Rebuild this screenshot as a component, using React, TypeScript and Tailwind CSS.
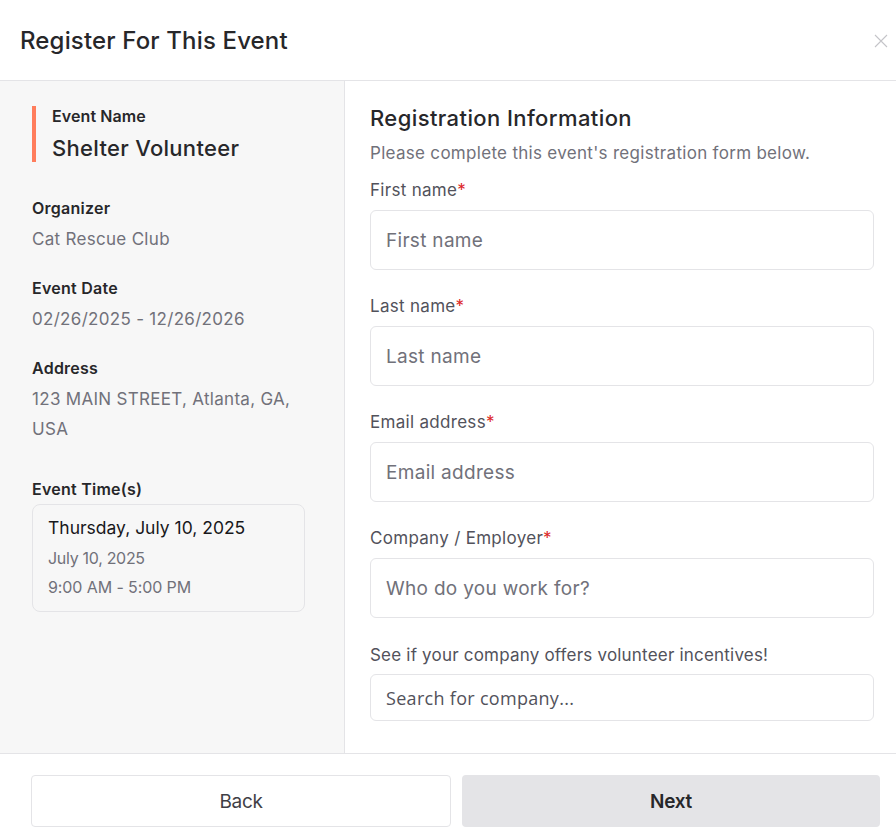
const font = { fontFamily: 'Inter, "Noto Sans", sans-serif' };

function Field({ label, placeholder }: { label: string; placeholder: string }) {
  return (
    <div className="flex flex-col">
      <label className="text-[17px] leading-[24px] text-[#52525b] tracking-[0.3px]">
        {label}
        <span className="text-[#dc2626]">*</span>
      </label>
      <input
        placeholder={placeholder}
        className="mt-[8px] h-[60px] w-full rounded-[6px] border border-[#e4e4e7] bg-white px-[15px] text-[19px] tracking-[0.3px] text-[#27272a] placeholder:text-[#71717a] outline-none"
      />
    </div>
  );
}

function Info({ label, value }: { label: string; value: string }) {
  return (
    <div className="flex flex-col">
      <span className="text-[16px] leading-[24px] font-semibold text-[#27272a] tracking-[0.25px]">{label}</span>
      <span className="mt-[4px] text-[17px] leading-[30px] text-[#71717a] tracking-[0.3px]">{value}</span>
    </div>
  );
}

export default function App() {
  return (
    <div className="flex h-[840px] w-[896px] flex-col bg-white" style={font}>
      {/* Header */}
      <div className="flex h-[81px] shrink-0 items-center justify-between border-b border-[#e4e4e7] pl-[20px] pr-[3px] pt-[2px]">
        <h1 className="text-[24px] font-medium tracking-[0.15px] text-[#27272a]">Register For This Event</h1>
        <button className="flex h-[24px] w-[24px] items-center justify-center text-[#c4c4c8]">
          <svg width="14" height="14" viewBox="0 0 14 14" fill="none" stroke="currentColor" strokeWidth="1.1">
            <path d="M1 1L13 13M13 1L1 13" />
          </svg>
        </button>
      </div>

      {/* Body */}
      <div className="flex min-h-0 flex-1">
        <aside className="w-[345px] shrink-0 border-r border-[#e4e4e7] bg-[#f7f7f7] pl-[32px] pr-[39px] pt-[25px]">
          <div className="flex border-l-[4px] border-[#ff7d5c] pl-[16px]">
            <div className="flex flex-col">
              <span className="text-[16px] leading-[20px] font-semibold text-[#27272a] tracking-[0.1px]">Event Name</span>
              <span className="mt-[8px] text-[22px] leading-[28px] font-medium text-[#27272a] tracking-[0.3px]">Shelter Volunteer</span>
            </div>
          </div>

          <div className="mt-[34px] flex flex-col gap-[22px]">
            <Info label="Organizer" value="Cat Rescue Club" />
            <Info label="Event Date" value="02/26/2025 - 12/26/2026" />
            <Info label="Address" value="123 MAIN STREET, Atlanta, GA, USA" />
          </div>

          <div className="mt-[33px] flex flex-col">
            <span className="text-[16px] leading-[24px] font-semibold text-[#27272a] tracking-[0.25px]">Event Time(s)</span>
            <div className="mt-[3px] flex flex-col rounded-[8px] border border-[#e4e4e7] px-[15px] pt-[10px] pb-[9px]">
              <span className="text-[17.5px] leading-[26px] text-[#18181b] tracking-[0px]">Thursday, July 10, 2025</span>
              <span className="mt-[3px] text-[16px] leading-[29px] text-[#71717a] tracking-[-0.3px]">July 10, 2025</span>
              <span className="text-[16px] leading-[29px] text-[#71717a] tracking-[-0.1px]">9:00 AM - 5:00 PM</span>
            </div>
          </div>
        </aside>

        <main className="flex-1 pl-[25px] pr-[22px] pt-[22px]">
          <h2 className="text-[22px] leading-[30px] font-medium text-[#27272a] tracking-[0.4px]">Registration Information</h2>
          <p className="mt-[7px] text-[17px] leading-[26px] text-[#71717a] tracking-[0.3px]">Please complete this event's registration form below.</p>

          <div className="mt-[12px] flex flex-col gap-[24px]">
            <Field label="First name" placeholder="First name" />
            <Field label="Last name" placeholder="Last name" />
            <Field label="Email address" placeholder="Email address" />
            <Field label="Company / Employer" placeholder="Who do you work for?" />
          </div>

          <p className="mt-[25px] text-[17px] leading-[24px] text-[#52525b] tracking-[0.2px]">See if your company offers volunteer incentives!</p>
          <input
            placeholder="Search for company..."
            className="mt-[7px] h-[47px] w-full rounded-[6px] border border-[#e4e4e7] bg-white px-[15px] text-[18px] tracking-[0.3px] text-[#27272a] placeholder:text-[#52525b] outline-none"
            style={{ fontFamily: '"Open Sans", sans-serif' }}
          />
        </main>
      </div>

      {/* Footer */}
      <div className="flex h-[87px] shrink-0 items-start gap-[11px] border-t border-[#e4e4e7] pl-[31px] pr-[16px] pt-[21px]">
        <button className="h-[52px] flex-1 rounded-[4px] border border-[#e4e4e7] bg-white pt-[2px] text-[19px] text-[#3f3f46] tracking-[-0.3px]">
          Back
        </button>
        <button className="h-[52px] flex-1 rounded-[4px] bg-[#e4e4e7] pt-[2px] text-[19px] font-semibold text-[#27272a] tracking-[-0.3px]">
          Next
        </button>
      </div>
    </div>
  );
}
